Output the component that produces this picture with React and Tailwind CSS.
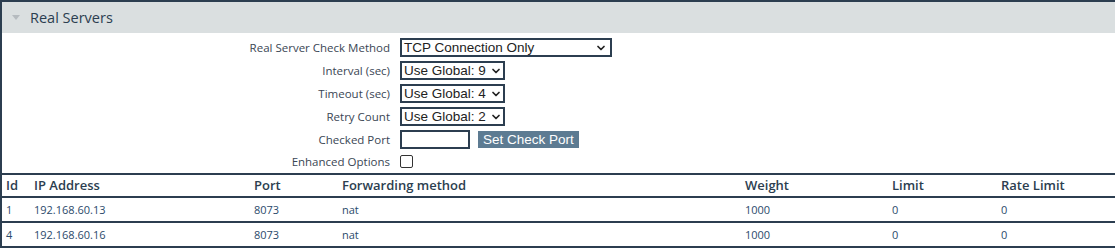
import { ChevronDown } from "lucide-react";

const rows = [
  { id: 1, ip: "192.168.60.13", port: "8073", method: "nat", weight: "1000", limit: "0", rate: "0" },
  { id: 4, ip: "192.168.60.16", port: "8073", method: "nat", weight: "1000", limit: "0", rate: "0" },
];

function FakeSelect({ value, wide }) {
  return (
    <div
      className={`flex h-[19px] items-center justify-between gap-[4px] whitespace-nowrap border-2 border-[#2c3e50] bg-white pl-[2px] pr-[3px] font-['Liberation_Sans'] text-[13.5px] leading-none text-[#222] ${
        wide ? "w-[212px]" : "w-[105px]"
      }`}
    >
      <span>{value}</span>
      <ChevronDown size={12} strokeWidth={3.5} className="shrink-0 text-[#222]" />
    </div>
  );
}

function Row({ label, children }) {
  return (
    <div className="flex items-center">
      <div className="w-[388px] whitespace-nowrap text-right text-[11.5px] text-[#3a4654]">{label}</div>
      <div className="ml-[10px] flex items-center gap-2">{children}</div>
    </div>
  );
}

export default function App() {
  return (
    <div className="h-[250px] w-[1115px] bg-white font-['Open_Sans',sans-serif] text-[#2c3e50]">
      <div className="border-l-2 border-t-2 border-[#2c3e50]">
        {/* Header */}
        <div className="flex h-[31px] items-center bg-[#dadfe0] pl-[10px]">
          <div className="mr-[10px] h-0 w-0 border-x-[4px] border-t-[5px] border-x-transparent border-t-[#b5bbbf]" />
          <span className="text-[14.5px] text-[#2c3e50]">Real Servers</span>
        </div>

        {/* Form */}
        <div className="flex flex-col gap-[4px] pt-[5px]">
          <Row label="Real Server Check Method">
            <FakeSelect value="TCP Connection Only" wide />
          </Row>
          <Row label="Interval (sec)">
            <FakeSelect value="Use Global: 9" />
          </Row>
          <Row label="Timeout (sec)">
            <FakeSelect value="Use Global: 4" />
          </Row>
          <Row label="Retry Count">
            <FakeSelect value="Use Global: 2" />
          </Row>
          <Row label="Checked Port">
            <input type="text" className="h-[19px] w-[70px] border-2 border-[#2c3e50] bg-white" />
            <button className="h-[17px] whitespace-nowrap bg-[#5d7b92] px-[5px] font-['Liberation_Sans'] text-[13.5px] leading-none text-white">
              Set Check Port
            </button>
          </Row>
          <Row label="Enhanced Options">
            <div className="h-[13px] w-[13px] rounded-[2px] border border-[#333] bg-white" />
          </Row>
        </div>

        {/* Table */}
        <table className="mt-[3px] w-full border-collapse text-left">
          <thead>
            <tr className="border-t-2 border-b-2 border-[#2c3e50]">
              <th className="h-[23px] w-[28px] pl-[4px] text-[13px] font-semibold">Id</th>
              <th className="w-[220px] pl-[4px] text-[13px] font-semibold">IP Address</th>
              <th className="w-[88px] pl-[4px] text-[13px] font-semibold">Port</th>
              <th className="w-[403px] pl-[4px] text-[13px] font-semibold">Forwarding method</th>
              <th className="w-[147px] pl-[4px] text-[13px] font-semibold">Weight</th>
              <th className="w-[109px] pl-[4px] text-[13px] font-semibold">Limit</th>
              <th className="pl-[4px] text-[13px] font-semibold">Rate Limit</th>
            </tr>
          </thead>
          <tbody className="text-[11px] text-[#2b4a6b]">
            {rows.map((r) => (
              <tr key={r.id} className="border-b-2 border-[#2c3e50]">
                <td className="h-[25px] pl-[4px]">{r.id}</td>
                <td className="pl-[4px]">{r.ip}</td>
                <td className="pl-[4px]">{r.port}</td>
                <td className="pl-[4px]">{r.method}</td>
                <td className="pl-[4px]">{r.weight}</td>
                <td className="pl-[4px]">{r.limit}</td>
                <td className="pl-[4px]">{r.rate}</td>
              </tr>
            ))}
          </tbody>
        </table>
      </div>
    </div>
  );
}
